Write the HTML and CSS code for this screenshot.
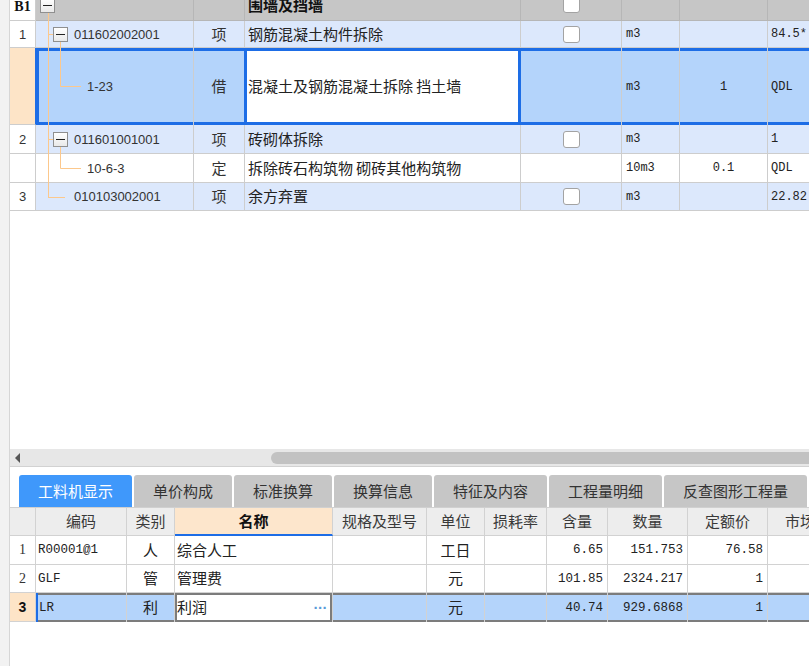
FILE: index.html
```html
<!DOCTYPE html>
<html lang="zh-CN">
<head>
<meta charset="utf-8">
<title>工料机显示</title>
<link rel="stylesheet" href="styles.css">
</head>
<body>
<div class="app">
  <div class="gutter"></div>
  <div class="main">
    <div class="tree-wrap">
      <div class="trow r-b1">
        <div class="c num b1">B1</div>
        <div class="c code lv0"><span class="minus"></span></div>
        <div class="c"></div>
        <div class="c name bold">围墙及挡墙</div>
        <div class="c chk"><span class="box"></span></div>
        <div class="c"></div>
        <div class="c"></div>
        <div class="c"></div>
      </div>
      <div class="trow r-item h27">
        <div class="c num">1</div>
        <div class="c code lv1"><span class="minus"></span><span class="ct">011602002001</span></div>
        <div class="c type">项</div>
        <div class="c name">钢筋混凝土构件拆除</div>
        <div class="c chk"><span class="box"></span></div>
        <div class="c unit">m3</div>
        <div class="c qty"></div>
        <div class="c expr">84.5*</div>
      </div>
      <div class="trow r-sel h77">
        <div class="c num"></div>
        <div class="c code lv2"><span class="ct">1-23</span></div>
        <div class="c type">借</div>
        <div class="c name">混凝土及钢筋混凝土拆除 挡土墙</div>
        <div class="c chk"></div>
        <div class="c unit">m3</div>
        <div class="c qty">1</div>
        <div class="c expr">QDL</div>
      </div>
      <div class="trow r-item h29">
        <div class="c num">2</div>
        <div class="c code lv1"><span class="minus"></span><span class="ct">011601001001</span></div>
        <div class="c type">项</div>
        <div class="c name">砖砌体拆除</div>
        <div class="c chk"><span class="box"></span></div>
        <div class="c unit">m3</div>
        <div class="c qty"></div>
        <div class="c expr">1</div>
      </div>
      <div class="trow r-def h29">
        <div class="c num"></div>
        <div class="c code lv2"><span class="ct">10-6-3</span></div>
        <div class="c type">定</div>
        <div class="c name">拆除砖石构筑物 砌砖其他构筑物</div>
        <div class="c chk"></div>
        <div class="c unit">10m3</div>
        <div class="c qty">0.1</div>
        <div class="c expr">QDL</div>
      </div>
      <div class="trow r-item h28">
        <div class="c num">3</div>
        <div class="c code lv1b"><span class="ct">010103002001</span></div>
        <div class="c type">项</div>
        <div class="c name">余方弃置</div>
        <div class="c chk"><span class="box"></span></div>
        <div class="c unit">m3</div>
        <div class="c qty"></div>
        <div class="c expr">22.82</div>
      </div>
      <svg class="tree-lines" width="100" height="220" viewBox="0 0 100 220">
        <g stroke="#fcc88c" stroke-width="1" fill="none">
          <path d="M38.5 21V205.5"/>
          <path d="M38 42.5H43"/>
          <path d="M50.5 50V94.5H71"/>
          <path d="M38 147.5H43"/>
          <path d="M50.5 155V176.5H71"/>
          <path d="M38 205.5H55"/>
        </g>
      </svg>
    </div>

    <div class="blank"></div>

    <div class="hscroll">
      <span class="arrow-left"></span>
      <span class="thumb"></span>
    </div>

    <div class="tabs">
      <div class="tab active">工料机显示</div>
      <div class="tab">单价构成</div>
      <div class="tab">标准换算</div>
      <div class="tab">换算信息</div>
      <div class="tab">特征及内容</div>
      <div class="tab">工程量明细</div>
      <div class="tab">反查图形工程量</div>
    </div>

    <div class="grid2">
      <div class="brow bhead">
        <div class="d"></div>
        <div class="d hc">编码</div>
        <div class="d hc">类别</div>
        <div class="d hc hname">名称</div>
        <div class="d hc">规格及型号</div>
        <div class="d hc">单位</div>
        <div class="d hc">损耗率</div>
        <div class="d hc">含量</div>
        <div class="d hc">数量</div>
        <div class="d hc">定额价</div>
        <div class="d hc">市场价</div>
      </div>
      <div class="brow h29">
        <div class="d bnum">1</div>
        <div class="d mono">R00001@1</div>
        <div class="d cen">人</div>
        <div class="d txt">综合人工</div>
        <div class="d"></div>
        <div class="d cen">工日</div>
        <div class="d"></div>
        <div class="d mono r">6.65</div>
        <div class="d mono r">151.753</div>
        <div class="d mono r">76.58</div>
        <div class="d"></div>
      </div>
      <div class="brow h28">
        <div class="d bnum">2</div>
        <div class="d mono">GLF</div>
        <div class="d cen">管</div>
        <div class="d txt">管理费</div>
        <div class="d"></div>
        <div class="d cen">元</div>
        <div class="d"></div>
        <div class="d mono r">101.85</div>
        <div class="d mono r">2324.217</div>
        <div class="d mono r">1</div>
        <div class="d"></div>
      </div>
      <div class="brow bsel h29">
        <div class="d bnum">3</div>
        <div class="d mono bcode">LR</div>
        <div class="d cen">利</div>
        <div class="d txt bedit"><span>利润</span><span class="more">···</span></div>
        <div class="d"></div>
        <div class="d cen">元</div>
        <div class="d"></div>
        <div class="d mono r">40.74</div>
        <div class="d mono r">929.6868</div>
        <div class="d mono r">1</div>
        <div class="d"></div>
      </div>
    </div>
  </div>
</div>
</body>
</html>
```

FILE: styles.css
```css
* { box-sizing: border-box; margin: 0; padding: 0; }

html, body {
  width: 809px;
  height: 666px;
  overflow: hidden;
  background: #ffffff;
}

body {
  font-family: "Noto Sans CJK SC", "Liberation Sans", sans-serif;
  color: #222;
}

.app {
  display: flex;
  height: 666px;
}

.gutter {
  flex: none;
  width: 10px;
  background: #f2f2f2;
  border-right: 1px solid #d6d6d6;
}

.main {
  flex: 1;
  min-width: 0;
  display: flex;
  flex-direction: column;
  overflow: hidden;
}

/* ---------- top tree table ---------- */
.tree-wrap {
  position: relative;
  flex: none;
  margin-top: -8px;
}

.trow {
  display: grid;
  grid-template-columns: 26px 158px 51px 276px 101px 58px 88px 80px;
  height: 29px;
}

.trow.h27 { height: 27px; }
.trow.h28 { height: 28px; }
.trow.h29 { height: 29px; }
.trow.h77 { height: 77px; }

.c {
  display: flex;
  align-items: center;
  overflow: hidden;
  white-space: nowrap;
  border-right: 1px solid #cdcdcd;
  border-bottom: 1px solid #cdcdcd;
  font-size: 15px;
}

.c.num {
  justify-content: center;
  font-family: "Liberation Sans", sans-serif;
  font-size: 13px;
  color: #333;
  background: #fff;
}

.c.num.b1 {
  font-family: "Liberation Serif", serif;
  font-weight: bold;
  font-size: 14px;
  color: #111;
  padding-top: 1px;
}

.c.code {
  font-family: "Liberation Sans", sans-serif;
  font-size: 13px;
  color: #333;
}

.code.lv0 { padding-left: 4px; }
.code.lv1 { padding-left: 17px; }
.code.lv1b { padding-left: 38px; }
.code.lv2 { padding-left: 51px; }

.ct { margin-left: 6px; }
.lv1b .ct, .lv2 .ct { margin-left: 0; }

.minus {
  position: relative;
  flex: none;
  width: 15px;
  height: 15px;
  border: 1px solid #8f8f8f;
  background: linear-gradient(#ffffff, #e9e9e9);
}

.minus::before {
  content: "";
  position: absolute;
  left: 2px;
  right: 2px;
  top: 6px;
  height: 1px;
  background: #222;
}

.c.type { justify-content: center; color: #333; padding-bottom: 2px; }

.c.name { padding-left: 3px; padding-bottom: 2px; color: #222; }
.c.name.bold { font-weight: bold; color: #111; }

.c.chk { justify-content: center; }

.box {
  width: 17px;
  height: 17px;
  border: 1px solid #a3a3a3;
  border-radius: 3px;
  background: #fff;
}

.c.unit,
.c.qty,
.c.expr {
  font-family: "Liberation Mono", monospace;
  font-size: 12px;
  color: #222;
}

.c.unit { padding-left: 4px; }
.c.qty { justify-content: center; }
.c.expr { padding-left: 3px; }

/* B1 header row */
.r-b1 .c { background: #c6c6c6; border-color: #b6b6b6; }
.r-b1 .c.num { background: #fff; border-color: #cdcdcd; }
.r-b1 .code.lv0 .minus { margin-top: -2px; }
.r-b1 .c.name { padding-bottom: 4px; font-size: 15px; }
.r-b1 .c.chk .box { margin-top: -3px; }

/* list rows */
.r-item .c { background: #dce8fc; }
.r-item .c.num { background: #fff; }

.r-def .c { background: #fff; }

/* selected row */
.r-sel .c {
  background: #b4d4fb;
  border-bottom: none;
  box-shadow: inset 0 3px 0 #1d6de6, inset 0 -3px 0 #1d6de6;
}

.r-sel .c.num {
  background: #fde4c7;
  box-shadow: none;
  border-bottom: 1px solid #cdcdcd;
  border-right-color: #1d6de6;
}

.r-sel .c.code {
  box-shadow: inset 3px 0 0 #1d6de6, inset 0 3px 0 #1d6de6, inset 0 -3px 0 #1d6de6;
}

.r-sel .c.type { border-right-color: #1d6de6; }

.r-sel .c.name {
  background: #fff;
  border-right-color: #1d6de6;
  box-shadow: inset 2px 0 0 #1d6de6, inset -2px 0 0 #1d6de6, inset 0 3px 0 #1d6de6, inset 0 -3px 0 #1d6de6;
}

.tree-lines {
  position: absolute;
  left: 0;
  top: 0;
  pointer-events: none;
}

/* ---------- blank + scrollbar ---------- */
.blank {
  flex: none;
  height: 238px;
  background: #fff;
}

.hscroll {
  flex: none;
  height: 18px;
  display: flex;
  align-items: center;
  padding-left: 5px;
  background: #e7e7e7;
  border-bottom: 1px solid #d2d2d2;
  overflow: hidden;
}

.arrow-left {
  flex: none;
  width: 0;
  height: 0;
  border-top: 5px solid transparent;
  border-bottom: 5px solid transparent;
  border-right: 5px solid #555;
}

.thumb {
  flex: none;
  width: 600px;
  height: 12px;
  margin-left: 251px;
  border-radius: 6px;
  background: #c2c2c2;
}

/* ---------- tabs ---------- */
.tabs {
  flex: none;
  display: flex;
  gap: 2px;
  padding: 8px 0 0 9px;
  background: #fff;
}

.tab {
  flex: none;
  height: 32px;
  padding: 0 19px 2px;
  display: flex;
  align-items: center;
  font-size: 15px;
  color: #333;
  background: #c6c6c6;
  border-radius: 3px 3px 0 0;
  white-space: nowrap;
}

.tab.active {
  background: #3f98fb;
  color: #fff;
}

/* ---------- bottom grid ---------- */
.grid2 {
  flex: none;
  border-top: 1px solid #d0d0d0;
}

.brow {
  display: grid;
  grid-template-columns: 26px 91px 48px 158px 94px 58px 62px 61px 80px 80px 80px;
  height: 28px;
}

.brow.h28 { height: 28px; }
.brow.h29 { height: 29px; }

.d {
  display: flex;
  align-items: center;
  overflow: hidden;
  white-space: nowrap;
  border-right: 1px solid #d2d2d2;
  border-bottom: 1px solid #d2d2d2;
  background: #fff;
  font-size: 15px;
  color: #222;
}

.d.cen, .d.txt, .d.hc { padding-bottom: 2px; }

.bhead { height: 28px; }
.bhead .d { background: #ededed; }

.d.hc {
  justify-content: center;
  color: #3a3a3a;
}

.d.hname {
  background: #fde6cc !important;
  font-weight: bold;
  color: #111;
  border-bottom: 2px solid #1d6de6;
}

.d.bnum {
  justify-content: center;
  font-family: "Liberation Serif", serif;
  font-size: 14px;
  color: #333;
}

.d.mono {
  font-family: "Liberation Mono", monospace;
  font-size: 12.5px;
  padding-left: 2px;
  color: #222;
}

.d.mono.r {
  justify-content: flex-end;
  padding-right: 4px;
}

.d.cen { justify-content: center; }
.d.txt { padding-left: 2px; }

/* selected bottom row */
.bsel .d {
  background: #b4d4fb;
  border-bottom: none;
  box-shadow: inset 0 2px 0 #7c7c7c, inset 0 -2px 0 #7c7c7c;
}

.bsel .d.bnum {
  background: #fde4c7;
  box-shadow: none;
  border-bottom: 1px solid #d2d2d2;
  font-family: "Liberation Sans", sans-serif;
  font-weight: bold;
  color: #111;
}

.bsel .d.bcode {
  box-shadow: inset 2px 0 0 #1d6de6, inset 0 2px 0 #7c7c7c, inset 0 -2px 0 #7c7c7c;
  padding-left: 3px;
}

.bsel .d.bedit {
  background: #fff;
  justify-content: space-between;
  padding-right: 5px;
  box-shadow: inset 0 0 0 2px #7c7c7c;
}

.more {
  font-family: "Liberation Sans", sans-serif;
  color: #5b9bd8;
  font-size: 15px;
  font-weight: bold;
  letter-spacing: -0.5px;
  padding-top: 2px;
}
```
